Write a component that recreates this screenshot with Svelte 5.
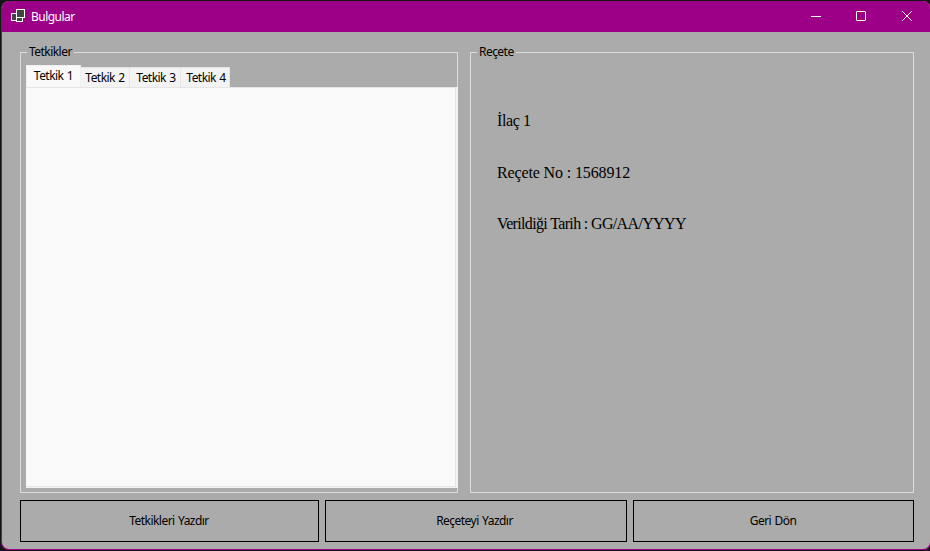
<script>
  const tabs = [
    { label: 'Tetkik 1', width: 55 },
    { label: 'Tetkik 2', width: 49 },
    { label: 'Tetkik 3', width: 51 },
    { label: 'Tetkik 4', width: 49 }
  ];
  let active = $state(0);
</script>

<div class="desktop">
  <div class="window">
    <header>
      <svg class="logo" width="15" height="14" viewBox="0 0 15 14" shape-rendering="crispEdges">
        <rect x="5.5" y="7.5" width="6" height="5" fill="#444" stroke="#fff" />
        <rect x="0.5" y="4.5" width="5" height="7" fill="#444" stroke="#fff" />
        <rect x="5.5" y="0.5" width="8" height="8" fill="#444" stroke="#fff" />
      </svg>
      <h1>Bulgular</h1>
      <div class="controls">
        <button aria-label="Simge durumuna küçült">
          <svg width="12" height="12" viewBox="0 0 12 12"><path d="M2 6.5H12" /></svg>
        </button>
        <button aria-label="Ekranı kapla">
          <svg width="12" height="12" viewBox="0 0 12 12"><rect x="1.5" y="1.5" width="9" height="9" rx="0.5" /></svg>
        </button>
        <button aria-label="Kapat">
          <svg width="12" height="12" viewBox="0 0 12 12"><path d="M1.2 1.2L10.8 10.8M10.8 1.2L1.2 10.8" /></svg>
        </button>
      </div>
    </header>
    <main>
      <div class="groups">
        <section class="group tests">
          <h2>Tetkikler</h2>
          <div class="tabs">
            {#each tabs as tab, i}
              <button class="tab" class:active={active === i} style="width: {tab.width}px" onclick={() => (active = i)}>{tab.label}</button>
            {/each}
          </div>
          <div class="page"></div>
        </section>
        <section class="group recipe">
          <h2>Reçete</h2>
          <div class="details">
            <p class="drug">İlaç 1</p>
            <p>Reçete No : 1568912</p>
            <p class="date">Verildiği Tarih : GG/AA/YYYY</p>
          </div>
        </section>
      </div>
      <footer>
        <button>Tetkikleri Yazdır</button>
        <button>Reçeteyi Yazdır</button>
        <button>Geri Dön</button>
      </footer>
    </main>
  </div>
</div>

<style>
  :global(body) { overflow: hidden; }
  .desktop {
    width: 930px;
    height: 551px;
    box-sizing: border-box;
    padding: 1px 0 1px 1px;
    background: #151515;
    font: 12px/16px "Noto Sans", "Open Sans", sans-serif;
    letter-spacing: -0.54px;
    word-spacing: 0.8px;
    color: #000;
  }
  .window {
    height: 549px;
    width: 930px;
    box-sizing: border-box;
    display: flex;
    flex-direction: column;
    border: 1px solid #9b0087;
    border-top: 0;
    border-radius: 8px;
    overflow: hidden;
    background: #ababab;
  }
  button {
    box-sizing: border-box;
    margin: 0;
    padding: 0;
    border: 0;
    background: none;
    font: inherit;
    letter-spacing: inherit;
    word-spacing: inherit;
    color: inherit;
  }
  header {
    height: 31px;
    flex: none;
    display: flex;
    align-items: center;
    padding-left: 9px;
    background: #9b0087;
    color: #fff;
  }
  .logo { margin-top: -1px; }
  h1 { margin: 0 0 0 5px; font: inherit; }
  .controls { display: flex; margin-left: auto; }
  .controls button {
    width: 46px;
    height: 30px;
    display: flex;
    align-items: center;
    justify-content: center;
  }
  .controls svg { margin-top: -1px; fill: none; stroke: #fff; stroke-width: 1; }
  main { flex: 1; padding: 20px 15px 0 18px; }
  .groups { display: flex; gap: 12px; }
  .group {
    box-sizing: border-box;
    height: 441px;
    border: 1px solid #dcdcdc;
  }
  .tests { width: 438px; }
  .recipe { width: 444px; }
  h2 {
    width: max-content;
    height: 16px;
    margin: -9px 0 0 6px;
    padding: 0 2px;
    background: #ababab;
    font: inherit;
  }
  .tabs {
    display: flex;
    align-items: flex-end;
    height: 22px;
    margin: 5px 0 0 5px;
  }
  .tab {
    height: 20px;
    padding-top: 1px;
    border: 1px solid #e5e5e5;
    border-left: 0;
    border-bottom: 0;
    border-radius: 1px 1px 0 0;
    background: #f3f3f3;
    line-height: 18px;
    white-space: nowrap;
  }
  .tab:nth-child(n + 3) { padding-left: 2px; }
  .tab.active { height: 22px; padding: 0 0 1px; border: 1px solid #f0f0f0; border-bottom: 0; background: #f9f9f9; }
  .page {
    box-sizing: border-box;
    height: 401px;
    margin: 0 -1px 0 5px;
    border: solid #f3f3f3;
    border-width: 0 2px 1px 0;
    background: #f9f9f9;
    box-shadow: inset 0 1px #e5e5e5, inset -1px -1px #e5e5e5;
  }
  .details {
    display: flex;
    flex-direction: column;
    gap: 31.5px;
    padding: 51px 0 0 26px;
    font: 16px/20px "Liberation Serif", serif;
    letter-spacing: -0.13px;
    word-spacing: 0;
  }
  p { margin: 0; }
  .drug { letter-spacing: -0.4px; }
  .date { letter-spacing: -0.65px; }
  footer { display: flex; gap: 6px; margin-top: 7px; }
  footer button { height: 42px; border: 1px solid #000; width: 299px; padding-right: 1px; }
  footer button:nth-child(2) { width: 302px; padding-right: 3px; }
  footer button:nth-child(3) { width: 281px; }
</style>
